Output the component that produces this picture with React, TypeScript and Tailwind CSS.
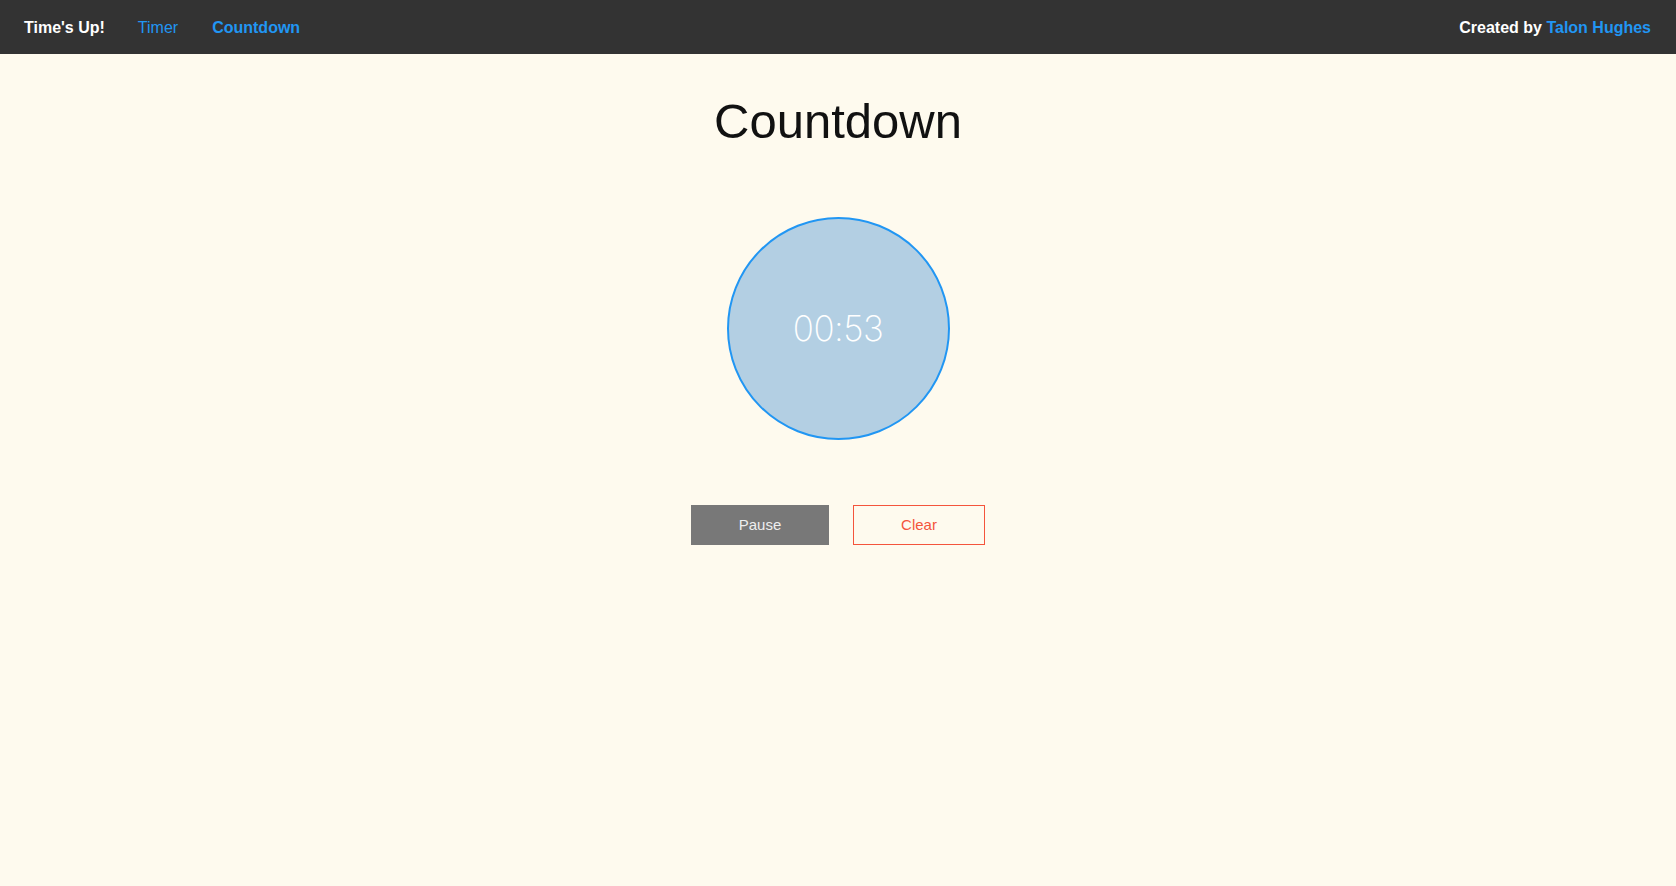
export default function App() {
  return (
    <div className="min-h-screen bg-[#fefaee] font-['Liberation_Sans',Arial,sans-serif] text-[#111]">
      <nav className="flex h-[54px] items-center justify-between bg-[#333333] pt-[2px] pl-6 pr-[25px] text-base">
        <div className="flex items-center">
          <span className="font-bold text-white">Time's Up!</span>
          <a className="ml-[33px] text-[#2196f3]">Timer</a>
          <a className="ml-[34px] font-bold text-[#2196f3]">Countdown</a>
        </div>
        <div className="font-bold text-white">
          Created by <a className="text-[#2196f3]">Talon Hughes</a>
        </div>
      </nav>

      <main className="flex flex-col items-center">
        <h1 className="mt-[43px] text-[49px] leading-none font-normal">Countdown</h1>

        <div className="mt-[71px] flex h-[223px] w-[223px] items-center justify-center rounded-full border-2 border-[#2196f3] bg-[#b3cfe3]">
          <span className="font-['Inter',sans-serif] text-[35px] font-extralight leading-none tracking-[-0.5px] text-white">
            00:53
          </span>
        </div>

        <div className="mt-[65px] flex gap-6">
          <button className="h-10 w-[138px] bg-[#787878] text-[15px] text-[#eeeeee]">Pause</button>
          <button className="h-10 w-[132px] border border-[#f4543c] text-[15px] text-[#f4543c]">Clear</button>
        </div>
      </main>
    </div>
  );
}
